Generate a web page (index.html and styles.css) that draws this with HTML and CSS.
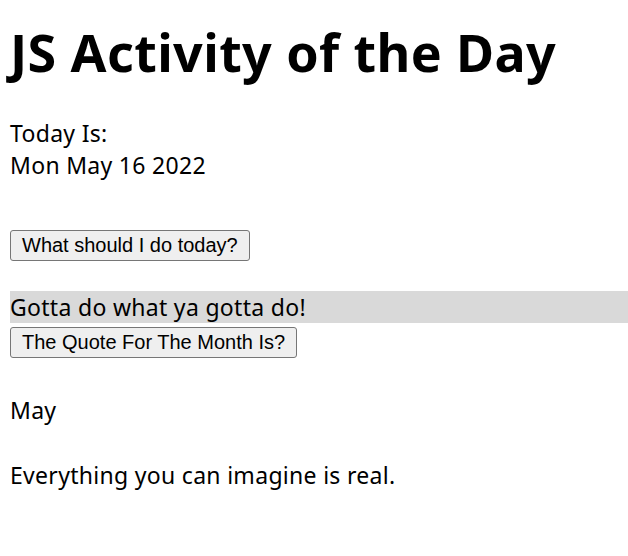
FILE: index.html
```html
<!DOCTYPE html>
<html>
<head>
<meta charset="utf-8">
<link rel="stylesheet" href="styles.css">
<title>JS Activity of the Day</title>
</head>
<body>
<h1 class="title">JS Activity of the Day</h1>
<p class="today">Today Is:<br>Mon May 16 2022</p>
<div class="btn-row first"><button class="btn">What should I do today?</button></div>
<div class="activity">Gotta do what ya gotta do!</div>
<div class="btn-row second"><button class="btn">The Quote For The Month Is?</button></div>
<p class="month">May</p>
<p class="quote">Everything you can imagine is real.</p>
</body>
</html>
```
FILE: styles.css
```css
html, body {
  margin: 0;
  padding: 0;
  background: #ffffff;
  overflow: hidden;
}
body {
  padding-left: 10px;
  font-family: "Comic Sans MS", "Noto Sans", sans-serif;
  font-size: 23px;
  line-height: 32px;
  letter-spacing: 0.3px;
  color: #000;
}
.title {
  margin: 22px 0 0;
  font-size: 52px;
  line-height: 60px;
  letter-spacing: 0.4px;
  font-weight: bold;
}
.today {
  margin: 35px 0 0;
}
.btn-row {
  line-height: 0;
  letter-spacing: normal;
}
.btn-row.first {
  margin-top: 49px;
}
.btn-row.second {
  margin-top: 4px;
}
.btn {
  font-family: "Liberation Sans", Arial, sans-serif;
  font-size: 20px;
  line-height: 23px;
  letter-spacing: normal;
  padding: 3px 11px;
  margin: 0;
  border: 1px solid #767676;
  border-radius: 3px;
  background: #efefef;
  color: #000;
}
.activity {
  margin-top: 30px;
  background: #d9d9d9;
  height: 32px;
}
.month {
  margin: 36px 0 0;
}
.quote {
  margin: 33px 0 0;
}
```
